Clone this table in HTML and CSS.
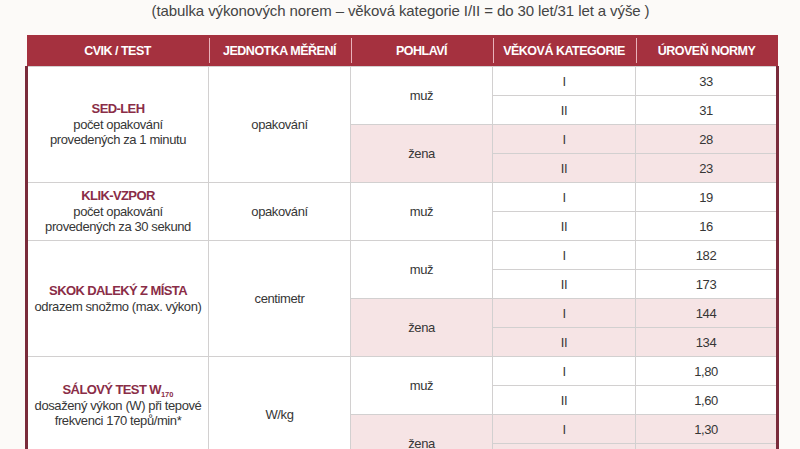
FILE: index.html
```html
<!DOCTYPE html>
<html lang="cs">
<head>
<meta charset="utf-8">
<title>Tabulka výkonových norem</title>
<link rel="stylesheet" href="styles.css">
</head>
<body>
<div class="page">
  <p class="caption">(tabulka výkonových norem – věková kategorie I/II = do 30 let/31 let a výše )</p>
  <table class="norms">
    <colgroup>
      <col class="c1"><col class="c2"><col class="c3"><col class="c4"><col class="c5">
    </colgroup>
    <thead>
      <tr>
        <th>CVIK / TEST</th>
        <th class="sep">JEDNOTKA MĚŘENÍ</th>
        <th class="sep">POHLAVÍ</th>
        <th class="sep">VĚKOVÁ KATEGORIE</th>
        <th class="sep">ÚROVEŇ NORMY</th>
      </tr>
    </thead>
    <tbody>
      <tr>
        <td rowspan="4" class="test"><span class="name">SED-LEH</span><br>počet opakování<br>provedených za 1 minutu</td>
        <td rowspan="4">opakování</td>
        <td rowspan="2">muž</td>
        <td>I</td><td>33</td>
      </tr>
      <tr><td>II</td><td>31</td></tr>
      <tr class="f">
        <td rowspan="2">žena</td>
        <td>I</td><td>28</td>
      </tr>
      <tr class="f"><td>II</td><td>23</td></tr>

      <tr>
        <td rowspan="2" class="test"><span class="name">KLIK-VZPOR</span><br>počet opakování<br>provedených za 30 sekund</td>
        <td rowspan="2">opakování</td>
        <td rowspan="2">muž</td>
        <td>I</td><td>19</td>
      </tr>
      <tr><td>II</td><td>16</td></tr>

      <tr>
        <td rowspan="4" class="test"><span class="name">SKOK DALEKÝ Z MÍSTA</span><br>odrazem snožmo (max. výkon)</td>
        <td rowspan="4">centimetr</td>
        <td rowspan="2">muž</td>
        <td>I</td><td>182</td>
      </tr>
      <tr><td>II</td><td>173</td></tr>
      <tr class="f">
        <td rowspan="2">žena</td>
        <td>I</td><td>144</td>
      </tr>
      <tr class="f"><td>II</td><td>134</td></tr>

      <tr>
        <td rowspan="4" class="test last"><span class="name">SÁLOVÝ TEST W<sub>170</sub></span><br>dosažený výkon (W) při tepové<br>frekvenci 170 tepů/min*</td>
        <td rowspan="4">W/kg</td>
        <td rowspan="2">muž</td>
        <td>I</td><td>1,80</td>
      </tr>
      <tr><td>II</td><td>1,60</td></tr>
      <tr class="f">
        <td rowspan="2">žena</td>
        <td>I</td><td>1,30</td>
      </tr>
      <tr class="f"><td>II</td><td>1,10</td></tr>
    </tbody>
  </table>
</div>
</body>
</html>
```

FILE: styles.css
```css
html, body {
  margin: 0;
  padding: 0;
  background: #fcfaf8;
}

.page {
  padding: 0 24px 0 25px;
  font-family: "Liberation Sans", Arial, sans-serif;
  color: #363636;
}

.caption {
  margin: 0;
  height: 35px;
  line-height: 21px;
  text-align: center;
  font-size: 15px;
  letter-spacing: -0.1px;
  color: #444;
}

.norms {
  width: 751px;
  border-collapse: collapse;
  table-layout: fixed;
  font-size: 13px;
  letter-spacing: -0.4px;
}

.c1 { width: 182px; }
.c2 { width: 142px; }
.c3 { width: 142px; }
.c4 { width: 143px; }
.c5 { width: 142px; }

.norms th {
  height: 31px;
  padding: 0;
  background-color: #a5313f;
  color: #fff;
  font-weight: bold;
  font-size: 12.5px;
  letter-spacing: -0.5px;
  text-align: center;
  vertical-align: middle;
}

.norms th.sep {
  background-image: linear-gradient(#e9b2ba, #e9b2ba);
  background-size: 1px 25px;
  background-position: left center;
  background-repeat: no-repeat;
}

.norms tbody {
  border-left: 3px solid #7a2b3b;
  border-right: 3px solid #7a2b3b;
}

.norms td {
  height: 28px;
  padding: 0;
  border: 1px solid #d2d0d0;
  background: #fff;
  text-align: center;
  vertical-align: middle;
  line-height: 15px;
}

.norms tr.f td {
  background: #f6e4e5;
}

.norms td.test {
  background: #fff;
  line-height: 15.5px;
  white-space: nowrap;
}

.norms td.test.last {
  padding-bottom: 18px;
}

.name {
  color: #8a2d47;
  font-weight: bold;
  font-size: 13px;
  letter-spacing: -0.6px;
}

.name sub {
  font-size: 7.5px;
  line-height: 0;
  vertical-align: -3px;
  letter-spacing: 0;
}
```
